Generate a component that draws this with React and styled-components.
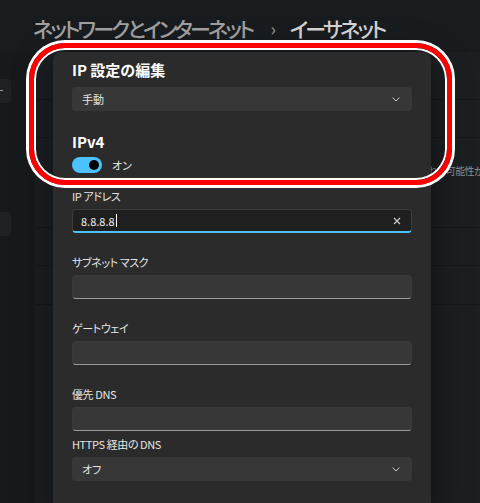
import React from 'react';
import styled, { createGlobalStyle } from 'styled-components';

const GlobalStyle = createGlobalStyle`
  html, body {
    margin: 0;
    padding: 0;
    background: #1a1d20;
  }
  body {
    font-family: "Noto Sans CJK JP", "Noto Sans", sans-serif;
    font-feature-settings: "palt";
    overflow: hidden;
    height: 503px;
  }
  * { box-sizing: border-box; }
`;

const ChevronDown = () => (
  <svg width="8" height="5" viewBox="0 0 8 5">
    <polyline points="0.6,0.6 4,4 7.4,0.6" fill="none" stroke="#c8c8c8" strokeWidth="1" />
  </svg>
);

const ClearIcon = () => (
  <svg width="8" height="8" viewBox="0 0 8 8">
    <path d="M1 1 L7 7 M7 1 L1 7" stroke="#d0d0d0" strokeWidth="1.1" fill="none" />
  </svg>
);

export default function App() {
  const rows = [48, 38, 90, 38, 39];

  return (
    <Page>
      <GlobalStyle />
      <Header>
        <Crumb>ネットワークとインターネット</Crumb>
        <CrumbSep>›</CrumbSep>
        <Crumb $current>イーサネット</Crumb>
      </Header>
      <Body>
        <Sidebar>
          <SideButton>
            <SideMark />
          </SideButton>
          <SideButton />
        </Sidebar>
        <Content>
          {rows.map((h, i) => (
            <SettingRow key={i} style={{ height: h }}>
              {i === 2 && <FadedText>れる可能性があ</FadedText>}
            </SettingRow>
          ))}
        </Content>
      </Body>

      <Dialog>
        <Title>IP 設定の編集</Title>
        <Select $top={6}>
          <span>手動</span>
          <ChevronDown />
        </Select>

        <SectionHeading>IPv4</SectionHeading>
        <ToggleRow>
          <Toggle>
            <Knob />
          </Toggle>
          <span>オン</span>
        </ToggleRow>

        <Field $top={15}>
          <Label>IP アドレス</Label>
          <Input $focused>
            <Value>
              8.8.8.8<Caret />
            </Value>
            <ClearIcon />
          </Input>
        </Field>

        <Field $top={21}>
          <Label>サブネット マスク</Label>
          <Input />
        </Field>

        <Field $top={21}>
          <Label>ゲートウェイ</Label>
          <Input />
        </Field>

        <Field $top={21}>
          <Label>優先 DNS</Label>
          <Input />
        </Field>

        <Field $top={5}>
          <Label>HTTPS 経由の DNS</Label>
          <Select $top={0}>
            <span>オフ</span>
            <ChevronDown />
          </Select>
        </Field>
      </Dialog>

      <Highlight />
    </Page>
  );
}

const Page = styled.div`
  position: relative;
  width: 480px;
  height: 503px;
  overflow: hidden;
  display: flex;
  flex-direction: column;
  background: #1a1d20;
`;

const Header = styled.div`
  height: 52px;
  flex-shrink: 0;
  display: flex;
  align-items: center;
  padding-left: 33px;
  padding-top: 3px;
  background: #191c1f;
  font-size: 21px;
  white-space: nowrap;
`;

const Crumb = styled.span`
  color: ${(p) => (p.$current ? '#d4d4d4' : '#a1a1a1')};
  font-weight: 500;
  letter-spacing: -2.8px;
`;

const CrumbSep = styled.span`
  color: #9a9a9a;
  font-size: 18px;
  margin: 0 14px 0 18px;
`;

const Body = styled.div`
  flex: 1;
  display: flex;
`;

const Sidebar = styled.div`
  width: 35px;
  flex-shrink: 0;
  background: #171a1d;
  display: flex;
  flex-direction: column;
  gap: 109px;
  padding-top: 27px;
`;

const SideButton = styled.div`
  position: relative;
  width: 11px;
  height: 24px;
  border-radius: 0 4px 4px 0;
  background: #1f2225;
`;

const SideMark = styled.div`
  position: absolute;
  left: 0;
  top: 11px;
  width: 3px;
  height: 1px;
  background: #9a9a9a;
`;

const Content = styled.div`
  flex: 1;
  display: flex;
  flex-direction: column;
  background: #1c1f22;
`;

const SettingRow = styled.div`
  border-bottom: 1px solid #15181b;
  flex-shrink: 0;
  padding-left: 393px;
  padding-top: 25px;
  overflow: hidden;
`;

const FadedText = styled.div`
  color: #8e8e8e;
  font-size: 10px;
  letter-spacing: -0.6px;
  white-space: nowrap;
`;

const Dialog = styled.div`
  position: absolute;
  left: 53px;
  top: 52px;
  width: 378px;
  height: 470px;
  padding: 7px 19px 0;
  background: #2b2b2b;
  border-radius: 8px 8px 0 0;
  box-shadow: 0 10px 40px rgba(0, 0, 0, 0.45);
  display: flex;
  flex-direction: column;
  color: #e8e8e8;
`;

const Title = styled.div`
  font-size: 15px;
  line-height: 22px;
  font-weight: 700;
  color: #ffffff;
`;

const Select = styled.div`
  margin-top: ${(p) => p.$top}px;
  height: 24px;
  border-radius: 4px;
  background: #373737;
  display: flex;
  align-items: center;
  justify-content: space-between;
  padding: 0 12px 0 10px;
  font-size: 11px;
  color: #e4e4e4;
`;

const SectionHeading = styled.div`
  margin-top: 20px;
  font-size: 15px;
  line-height: 22px;
  font-weight: 700;
  color: #ffffff;
`;

const ToggleRow = styled.div`
  margin-top: 4px;
  height: 16px;
  display: flex;
  align-items: center;
  gap: 10px;
  font-size: 11px;
  color: #e8e8e8;
`;

const Toggle = styled.div`
  width: 30px;
  height: 16px;
  border-radius: 8px;
  background: #4cc2ff;
  display: flex;
  align-items: center;
  justify-content: flex-end;
  padding-right: 3px;
`;

const Knob = styled.div`
  width: 10px;
  height: 10px;
  border-radius: 50%;
  background: #000000;
`;

const Field = styled.div`
  margin-top: ${(p) => p.$top}px;
  display: flex;
  flex-direction: column;
  gap: 5px;
`;

const Label = styled.div`
  font-size: 11px;
  line-height: 16px;
  letter-spacing: -0.4px;
  color: #e6e6e6;
`;

const Input = styled.div`
  height: 24px;
  border-radius: 4px;
  background: ${(p) => (p.$focused ? '#1f1f1f' : '#373737')};
  border: 1px solid ${(p) => (p.$focused ? '#3c3c3c' : '#3a3a3a')};
  border-bottom: ${(p) => (p.$focused ? '2px solid #4cc2ff' : '1px solid #9a9a9a')};
  display: flex;
  align-items: center;
  justify-content: space-between;
  padding: 0 10px 0 8px;
`;

const Value = styled.div`
  display: flex;
  align-items: center;
  font-size: 11px;
  color: #f0f0f0;
`;

const Caret = styled.div`
  width: 1px;
  height: 13px;
  margin-left: 1px;
  background: #ffffff;
`;

const Highlight = styled.div`
  position: absolute;
  left: 29px;
  top: 43px;
  width: 423px;
  height: 142px;
  border: 5px solid #ff0000;
  border-radius: 36px;
  box-shadow: 0 0 0 3px #ffffff, inset 0 0 0 2px #ffffff;
  pointer-events: none;
`;
